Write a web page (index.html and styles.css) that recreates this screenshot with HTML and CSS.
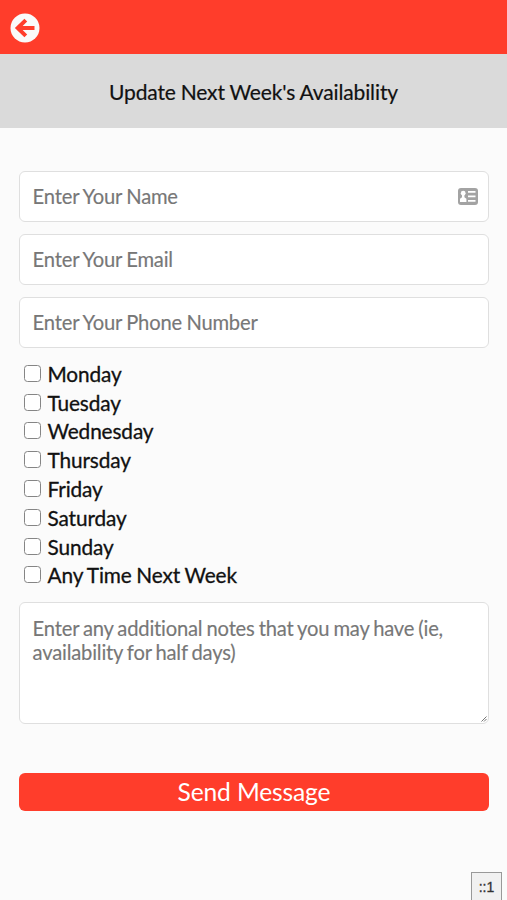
FILE: index.html
```html
<!DOCTYPE html>
<html lang="en">
<head>
<meta charset="utf-8">
<title>Update Next Week's Availability</title>
<link rel="stylesheet" href="styles.css">
</head>
<body>
<header class="topbar">
  <a class="back" href="#" aria-label="Back">
    <svg viewBox="0 0 30 30" width="30" height="30"><circle cx="15" cy="15" r="14.5" fill="#fafafa"/><path d="M15.8 7.1 7.7 15l8.1 7.9M8.5 15h16" fill="none" stroke="#ff3d2b" stroke-width="4"/></svg>
  </a>
</header>
<h1 class="title">Update Next Week's Availability</h1>
<form class="form">
  <div class="field">
    <input class="input" type="text" placeholder="Enter Your Name">
    <svg class="card-icon" viewBox="0 0 20 17" width="20" height="17"><rect width="20" height="17" rx="3" fill="#a3a3a3"/><g fill="#fff"><circle cx="5.2" cy="5.2" r="2.4"/><path d="M4 7h2.4v2.2l2 1.5V14H2v-3.3l2-1.5z"/><path d="M10 3h7.5v1.8H10zM10 7.5h7.5v1.8H10zM10 12h7.5v1.8H10z"/></g></svg>
  </div>
  <input class="input" type="email" placeholder="Enter Your Email">
  <input class="input" type="tel" placeholder="Enter Your Phone Number">
  <div class="days">
    <label class="day"><input class="check" type="checkbox">Monday</label>
    <label class="day"><input class="check" type="checkbox">Tuesday</label>
    <label class="day"><input class="check" type="checkbox">Wednesday</label>
    <label class="day"><input class="check" type="checkbox">Thursday</label>
    <label class="day"><input class="check" type="checkbox">Friday</label>
    <label class="day"><input class="check" type="checkbox">Saturday</label>
    <label class="day"><input class="check" type="checkbox">Sunday</label>
    <label class="day"><input class="check" type="checkbox">Any Time Next Week</label>
  </div>
  <div class="field">
    <textarea class="input notes" placeholder="Enter any additional notes that you may have (ie, availability for half days)"></textarea>
    <svg class="grip" viewBox="0 0 6 6" width="6" height="6"><path d="M.5 5.5l5-5M3 5.5 5.5 3" stroke="#777" fill="none"/></svg>
  </div>
  <button class="send" type="button">Send Message</button>
</form>
<div class="badge">::1</div>
</body>
</html>
```
FILE: styles.css
```css
* { box-sizing: border-box; }
body {
  margin: 0;
  height: 900px;
  overflow: hidden;
  background: #fbfbfb;
  color: #111;
  font-family: Lato, sans-serif;
}
.topbar {
  display: flex;
  height: 54px;
  padding: 13px 10px;
  background: #ff3d2b;
}
.back, .back svg { display: block; }
.title {
  display: flex;
  align-items: center;
  justify-content: center;
  height: 74px;
  margin: 0;
  background: #dadada;
  font-size: 21px;
  font-weight: 400;
  letter-spacing: -.12px;
  word-spacing: -.4px;
  -webkit-text-stroke: .2px #111;
}
.form {
  display: flex;
  flex-direction: column;
  gap: 12px;
  padding: 43px 18px 0 19px;
}
.field { position: relative; display: flex; }
.input {
  width: 100%;
  height: 51px;
  padding: 0 12.6px 2px;
  border: 1px solid #dfdfdf;
  border-radius: 6px;
  background: #fff;
  color: #111;
  font: 20.2px/24px Lato, sans-serif;
  letter-spacing: -.2px;
  word-spacing: -.5px;
  outline: none;
}
.input::placeholder { color: #777; opacity: 1; -webkit-text-stroke: .15px #777; }
.card-icon { position: absolute; right: 11px; top: 17px; }
.days { padding: 0 4.5px; }
.day {
  display: flex;
  align-items: center;
  height: 28.8px;
  padding-bottom: 2px;
  font-size: 20.8px;
  letter-spacing: -.12px;
  word-spacing: -.5px;
  -webkit-text-stroke: .3px #111;
}
.check {
  appearance: none;
  width: 17px;
  height: 17px;
  margin: 0 7px 0 0;
  border: 1px solid #858585;
  border-radius: 3.5px;
  background: #fff;
}
.notes { display: block; height: 122px; padding: 13px 12.6px; resize: none; word-spacing: -.9px; }
.grip { position: absolute; right: 2px; bottom: 2px; }
.send {
  height: 38px;
  margin-top: 37px;
  padding: 0;
  border: 0;
  border-radius: 6px;
  background: #ff3d2b;
  color: #fff;
  font: 24.6px/38px Lato, sans-serif;
  letter-spacing: -.15px;
}
.badge {
  position: fixed;
  right: 5px;
  bottom: -1px;
  width: 31px;
  height: 29px;
  border: 1px solid #999;
  background: #f1f1f1;
  color: #333;
  font: 14px/28px "Liberation Sans", sans-serif;
  -webkit-text-stroke: .3px #333;
  text-align: center;
}
```
